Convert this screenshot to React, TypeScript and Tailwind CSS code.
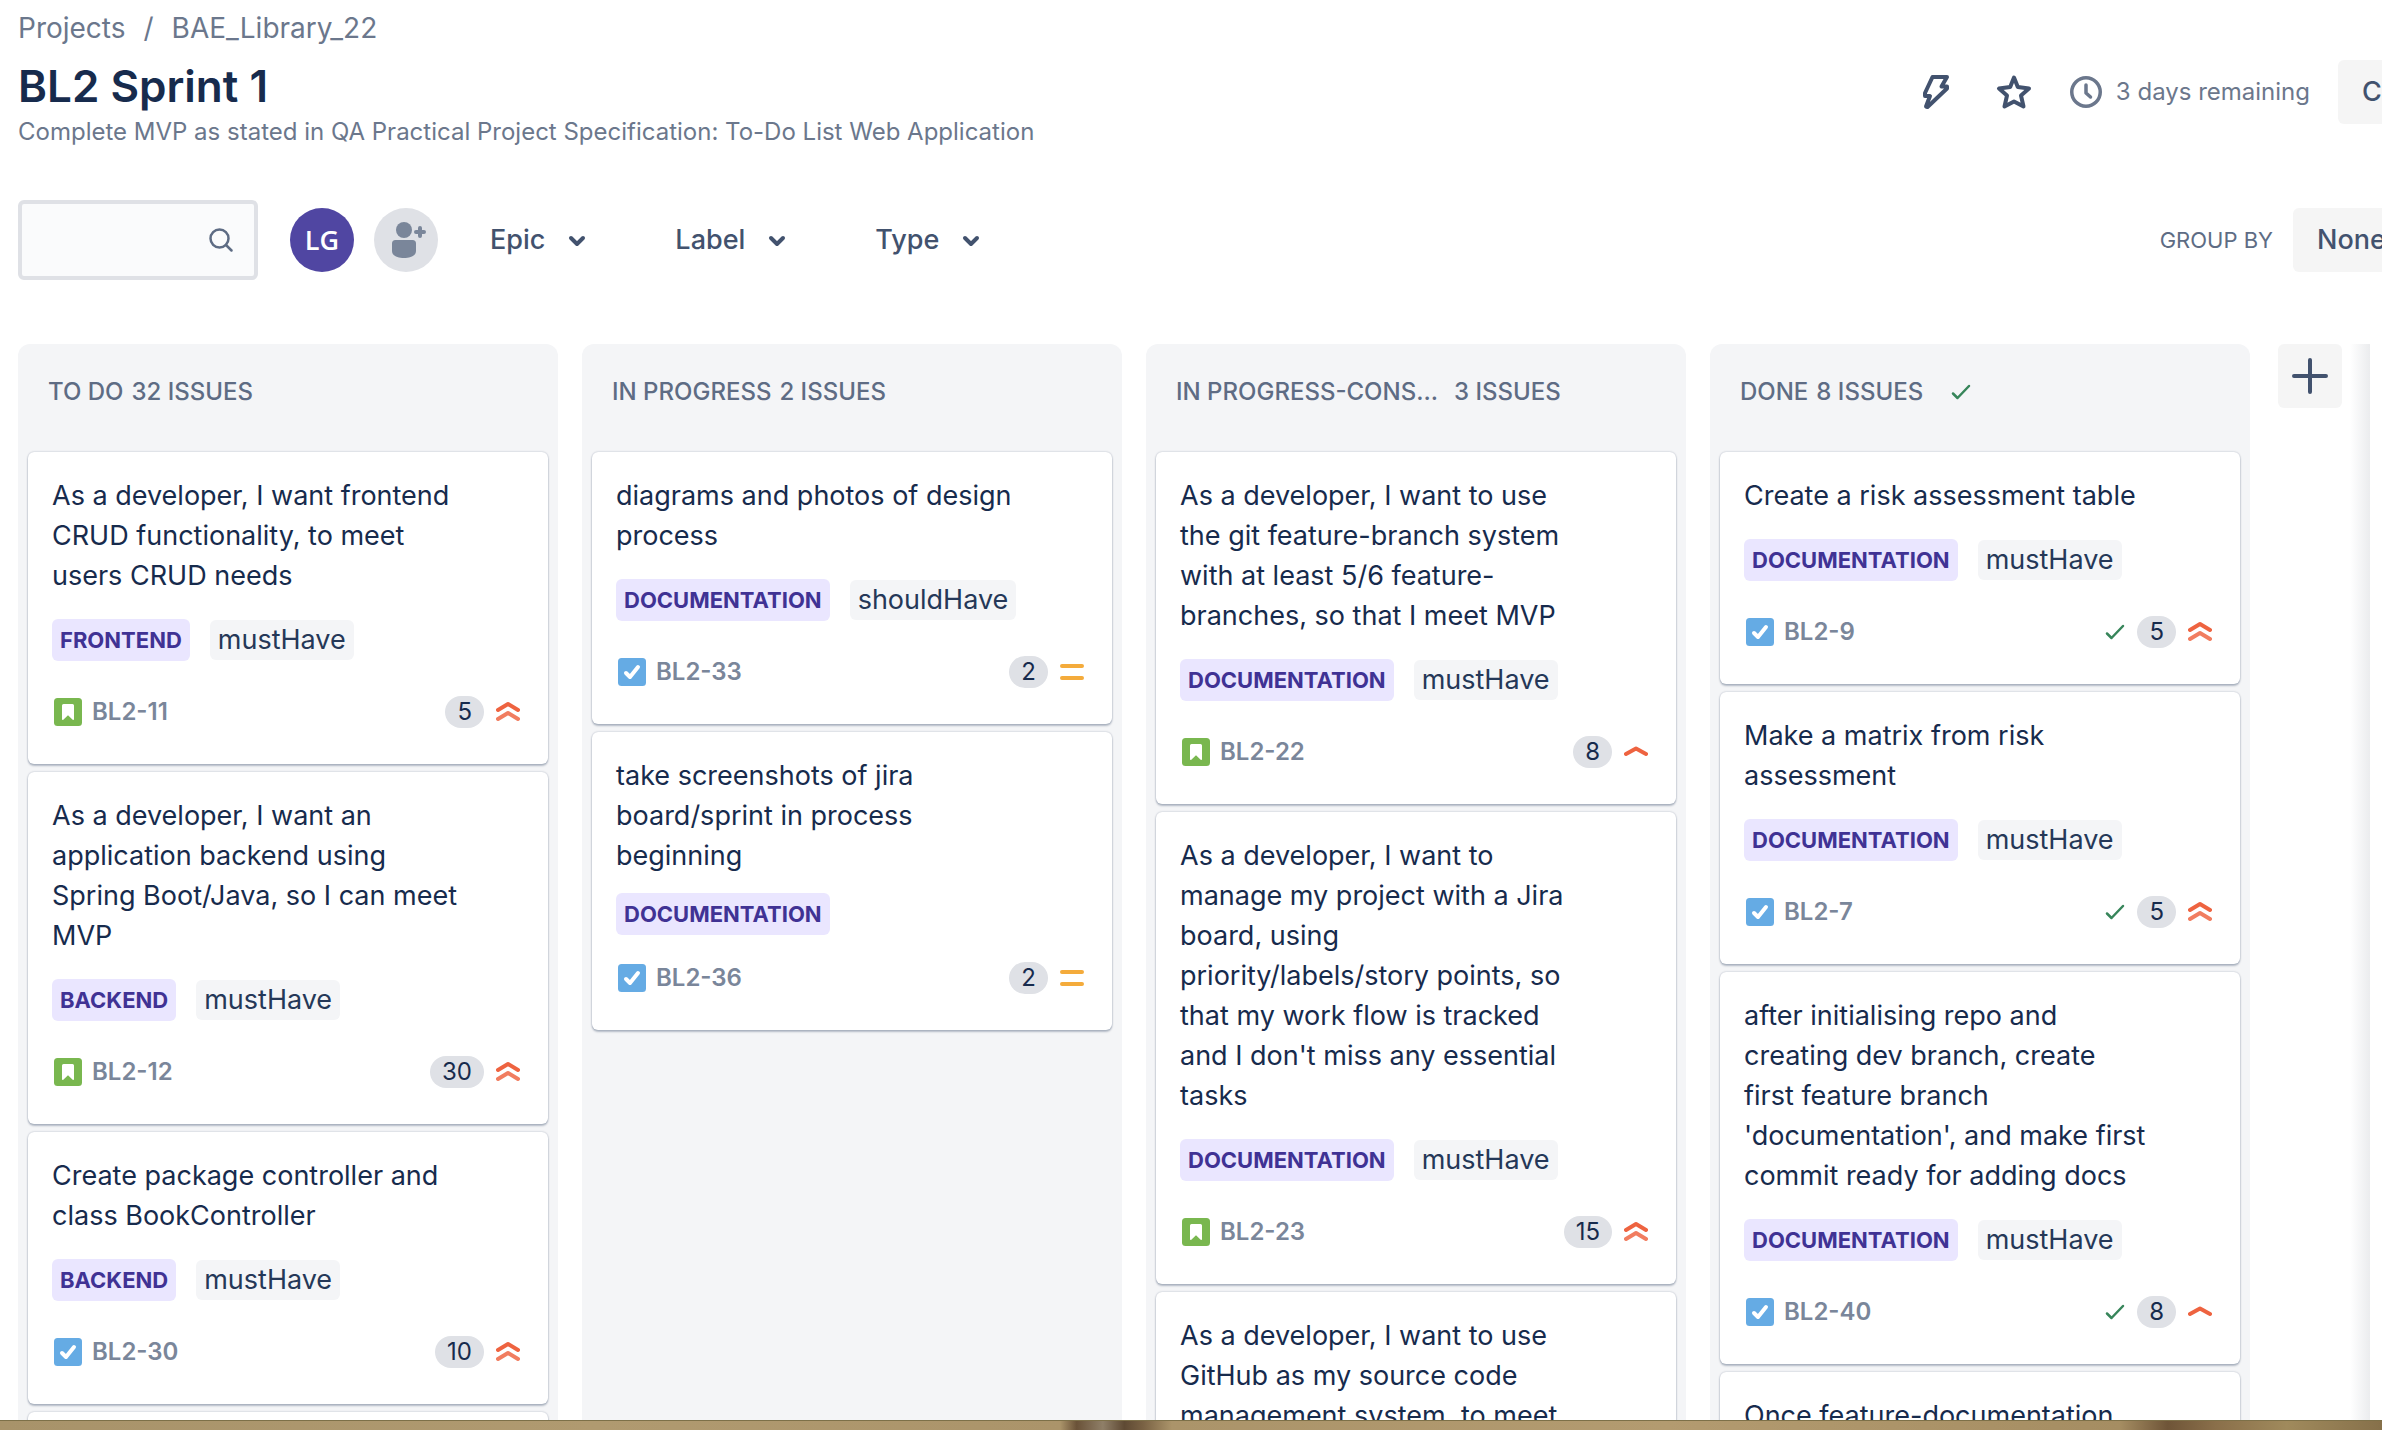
import React from "react";

type Priority = "highest" | "high" | "medium";
type Issue = {
  id: string;
  title: string[];
  epic?: string;
  label?: string;
  kind: "story" | "task";
  points: number;
  priority: Priority;
};
type Column = { name: string; count: string; issues: Issue[]; done?: boolean; truncated?: boolean };

const columns: Column[] = [
  {
    name: "TO DO",
    count: "32 ISSUES",
    issues: [
      { id: "BL2-11", title: ["As a developer, I want frontend", "CRUD functionality, to meet", "users CRUD needs"], epic: "FRONTEND", label: "mustHave", kind: "story", points: 5, priority: "highest" },
      { id: "BL2-12", title: ["As a developer, I want an", "application backend using", "Spring Boot/Java, so I can meet", "MVP"], epic: "BACKEND", label: "mustHave", kind: "story", points: 30, priority: "highest" },
      { id: "BL2-30", title: ["Create package controller and", "class BookController"], epic: "BACKEND", label: "mustHave", kind: "task", points: 10, priority: "highest" },
      { id: "BL2-31", title: ["Create package service"], epic: "BACKEND", label: "mustHave", kind: "task", points: 10, priority: "highest" },
    ],
  },
  {
    name: "IN PROGRESS",
    count: "2 ISSUES",
    issues: [
      { id: "BL2-33", title: ["diagrams and photos of design", "process"], epic: "DOCUMENTATION", label: "shouldHave", kind: "task", points: 2, priority: "medium" },
      { id: "BL2-36", title: ["take screenshots of jira", "board/sprint in process", "beginning"], epic: "DOCUMENTATION", kind: "task", points: 2, priority: "medium" },
    ],
  },
  {
    name: "IN PROGRESS-CONS...",
    count: "3 ISSUES",
    truncated: true,
    issues: [
      { id: "BL2-22", title: ["As a developer, I want to use", "the git feature-branch system", "with at least 5/6 feature-", "branches, so that I meet MVP"], epic: "DOCUMENTATION", label: "mustHave", kind: "story", points: 8, priority: "high" },
      { id: "BL2-23", title: ["As a developer, I want to", "manage my project with a Jira", "board, using", "priority/labels/story points, so", "that my work flow is tracked", "and I don't miss any essential", "tasks"], epic: "DOCUMENTATION", label: "mustHave", kind: "story", points: 15, priority: "highest" },
      { id: "BL2-24", title: ["As a developer, I want to use", "GitHub as my source code", "management system, to meet", "MVP"], epic: "DOCUMENTATION", label: "mustHave", kind: "story", points: 8, priority: "high" },
    ],
  },
  {
    name: "DONE",
    count: "8 ISSUES",
    done: true,
    issues: [
      { id: "BL2-9", title: ["Create a risk assessment table"], epic: "DOCUMENTATION", label: "mustHave", kind: "task", points: 5, priority: "highest" },
      { id: "BL2-7", title: ["Make a matrix from risk", "assessment"], epic: "DOCUMENTATION", label: "mustHave", kind: "task", points: 5, priority: "highest" },
      { id: "BL2-40", title: ["after initialising repo and", "creating dev branch, create", "first feature branch", "'documentation', and make first", "commit ready for adding docs"], epic: "DOCUMENTATION", label: "mustHave", kind: "task", points: 8, priority: "high" },
      { id: "BL2-41", title: ["Once feature-documentation", "is complete"], epic: "DOCUMENTATION", label: "mustHave", kind: "task", points: 8, priority: "high" },
    ],
  },
];

function KindIcon({ kind }: { kind: Issue["kind"] }) {
  return kind === "story" ? (
    <svg viewBox="0 0 28 28" className="size-7 shrink-0" role="img" aria-label="Story">
      <rect width="28" height="28" rx="3.5" fill="#79b74f" />
      <path d="M8 7.5A1.5 1.5 0 0 1 9.5 6h9A1.5 1.5 0 0 1 20 7.5V21.200c0 .7-.8 1-1.300.5L14 17.200l-4.700 4.500c-.5.500-1.300.2-1.300-.5z" fill="#fff" />
    </svg>
  ) : (
    <svg viewBox="0 0 28 28" className="size-7 shrink-0" role="img" aria-label="Task">
      <rect width="28" height="28" rx="3.5" fill="#65abe4" />
      <path d="M8 15 12 19l8-10" fill="none" stroke="#fff" strokeWidth="4" strokeLinecap="round" strokeLinejoin="round" />
    </svg>
  );
}

function PriorityIcon({ priority }: { priority: Priority }) {
  return (
    <svg viewBox="0 0 24 28" className="h-7 w-6 shrink-0" fill="none" strokeWidth="4" strokeLinecap="round" strokeLinejoin="round" role="img" aria-label={priority}>
      {priority === "medium" && <path d="M2 8h20M2 20h20" stroke="#f4ab3b" />}
      {priority === "high" && <path d="M2 16 12 10.500 22 16" stroke="#ee6340" />}
      {priority === "highest" && (
        <>
          <path d="M2 12 12 6l10 6" stroke="#ee6340" />
          <path d="M2 21 12 15l10 6" stroke="#f17d60" />
        </>
      )}
    </svg>
  );
}

function Check({ className }: { className: string }) {
  return (
    <svg viewBox="0 0 20 16" className={className} fill="none" stroke="#37855a" strokeWidth="2.500" strokeLinecap="round" strokeLinejoin="round" aria-hidden="true">
      <path d="M2 9.500 6.500 14 18 2" />
    </svg>
  );
}

function Card({ issue, done }: { issue: Issue; done?: boolean }) {
  return (
    <article className="rounded-md bg-white px-6 pt-6 pb-[34px] shadow-[0_2px_2px_rgba(9,30,66,0.25),0_0_2px_rgba(9,30,66,0.3)]">
      <h3 className="text-[27px] leading-10 whitespace-nowrap text-[#172b4d]">
        {issue.title.map((line) => (
          <span key={line} className="block">{line}</span>
        ))}
      </h3>
      <div className={issue.label ? "mt-[22px] flex h-11 items-center gap-5" : "mt-4 flex h-11 items-center gap-5"}>
        <span className="rounded-md bg-[#eae6ff] px-2 text-[22px] leading-[42px] font-bold text-[#403294]">{issue.epic}</span>
        {issue.label && <span className="rounded-md bg-[#f4f5f7] px-2 text-[27px] leading-10 text-[#253858]">{issue.label}</span>}
      </div>
      <div className={issue.label ? "mt-8 flex h-9 items-center" : "mt-6 flex h-9 items-center"}>
        <div className="flex flex-1 items-center gap-2.5 pl-0.5">
          <KindIcon kind={issue.kind} />
          <a href={"#" + issue.id} className="text-2xl leading-9 font-semibold text-[#7a869a]">{issue.id}</a>
        </div>
        <div className="flex items-center gap-3 pr-1">
          {done && <Check className="h-4 w-5" />}
          <span className="rounded-full bg-[#dfe1e6] px-3 text-2xl leading-8 text-[#172b4d]">{issue.points}</span>
          <PriorityIcon priority={issue.priority} />
        </div>
      </div>
    </article>
  );
}

function Filter({ name }: { name: string }) {
  return (
    <button className="flex items-center gap-[22px] rounded-md">
      <span>{name}</span>
      <svg viewBox="0 0 20 14" className="h-3.5 w-5" fill="none" stroke="currentColor" strokeWidth="4" strokeLinecap="round" strokeLinejoin="round" aria-hidden="true">
        <path d="M4 5 10 11 16 5" />
      </svg>
    </button>
  );
}

export default function App() {
  return (
    <div className="flex h-screen flex-col overflow-hidden bg-white font-['Inter',sans-serif] text-[#42526e]">
      <header className="flex shrink-0 items-start justify-between pt-2 pl-[18px]">
        <div>
          <nav className="flex gap-[18px] text-[28px] leading-10 text-[#6b778c]" aria-label="Breadcrumb">
            <a href="#projects">Projects</a>
            <span>/</span>
            <a href="#library">BAE_Library_22</a>
          </nav>
          <h1 className="mt-2 text-[44px] leading-[60px] font-semibold text-[#172b4d]">BL2 Sprint 1</h1>
          <p className="text-2xl leading-8 text-[#6b778c]">Complete MVP as stated in QA Practical Project Specification: To-Do List Web Application</p>
        </div>
        <div className="mt-[52px] -mr-14 flex h-16 shrink-0 items-center">
          <button aria-label="Automation" className="mr-[46px]">
            <svg viewBox="0 0 28 36" className="h-9 w-7" fill="none" stroke="currentColor" strokeWidth="4" strokeLinecap="round" strokeLinejoin="round">
              <path d="M10.500 3H25l-5.500 9.500H25v2L5.500 33 4 32.500 8 22H3v-3z" />
            </svg>
          </button>
          <button aria-label="Star" className="mr-[38px]">
            <svg viewBox="0 0 36 36" className="size-9" fill="none" stroke="currentColor" strokeWidth="4" strokeLinecap="round" strokeLinejoin="round">
              <path d="M18 3.500 21.800 13 33 14.500l-8 7L27.500 32.500 18 27.500 8.500 32.500 11 21.500l-8-7L14.200 13z" />
            </svg>
          </button>
          <span className="mr-7 flex items-center gap-3.5 text-2xl text-[#6b778c]">
            <svg viewBox="0 0 32 32" className="size-8" fill="none" stroke="currentColor" strokeWidth="3.500" strokeLinecap="round" strokeLinejoin="round" aria-hidden="true">
              <circle cx="16" cy="16" r="14.250" />
              <path d="M16 9v8l4.500 4" />
            </svg>
            3 days remaining
          </span>
          <button className="h-16 w-[100px] overflow-hidden rounded-md bg-[#f5f5f5] pl-6 text-left text-[27px] font-medium whitespace-nowrap">Complete sprint</button>
        </div>
      </header>

      <section className="mt-[52px] flex h-20 shrink-0 items-center pl-[18px]">
        <label className="flex h-20 w-60 items-center rounded-md border-4 border-[#dfe1e6] bg-[#fafbfc] pr-5">
          <input type="search" aria-label="Search board" className="min-w-0 flex-1 bg-transparent pl-4 text-[27px] outline-none" />
          <svg viewBox="0 0 26 26" className="size-[26px]" fill="none" stroke="#5e6c84" strokeWidth="2.500" strokeLinecap="round" aria-hidden="true">
            <circle cx="11.500" cy="11.500" r="9" />
            <path d="m18 18 5.500 5.500" />
          </svg>
        </label>
        <button className="ml-8 size-16 rounded-full bg-[#5046a2] font-['Open_Sans',sans-serif] text-[27px] font-semibold text-white">LG</button>
        <button aria-label="Add people" className="ml-5 flex size-16 items-center justify-center rounded-full bg-[#dfe1e6]">
          <svg viewBox="0 0 64 64" className="size-16" fill="#7a869a">
            <circle cx="30" cy="22" r="8" />
            <path d="M18 35.500a3.500 3.500 0 0 1 3.500-3.500h17a3.500 3.500 0 0 1 3.500 3.500V43c0 5-6 7-12 7s-12-2-12-7z" />
            <path d="M46 20v8M42 24h8" stroke="#7a869a" strokeWidth="4" strokeLinecap="round" />
          </svg>
        </button>
        <div className="ml-[52px] flex gap-[88px] text-[27px] font-medium">
          <Filter name="Epic" />
          <Filter name="Label" />
          <Filter name="Type" />
        </div>
        <div className="-mr-14 ml-auto flex items-center gap-5">
          <span className="text-[22px] text-[#5e6c84]">GROUP BY</span>
          <button className="h-16 w-[145px] rounded-md bg-[#f5f5f5] pl-6 text-left text-[27px] font-medium">None</button>
        </div>
      </section>

      <main className="mt-16 flex min-h-0 flex-1 pl-[18px]">
        <div className="grid min-w-0 flex-1 grid-cols-4 gap-6">
          {columns.map((column) => (
            <section key={column.name} className="min-h-0 overflow-hidden rounded-t-xl bg-[#f4f5f7] px-2.5">
              <h2 className="flex h-[108px] items-center pb-3 pl-5 text-2xl font-medium text-[#5e6c84]">
                <span>{column.name}</span>
                <span className={column.truncated ? "ml-4" : "ml-2"}>{column.count}</span>
                {column.done && <Check className="ml-7 h-4 w-5" />}
              </h2>
              <div className="flex flex-col gap-2">
                {column.issues.map((issue) => (
                  <Card key={issue.id} issue={issue} done={column.done} />
                ))}
              </div>
            </section>
          ))}
        </div>
        <button aria-label="Create column" className="ml-7 flex size-16 shrink-0 items-center justify-center rounded-md bg-[#f5f5f5]">
          <svg viewBox="0 0 36 36" className="size-9" fill="none" stroke="currentColor" strokeWidth="4" strokeLinecap="round">
            <path d="M18 2v32M2 18h32" />
          </svg>
        </button>
        <div className="mr-3 ml-2 w-5 shrink-0 bg-linear-to-r from-white to-[#ebecee]" />
      </main>

      <footer className="h-2.5 shrink-0 border-t border-[#7d7048] bg-[linear-gradient(90deg,#a8936a_0%,#b09a70_25%,#ab946a_44.500%,#6a5238_45.200%,#8f7f68_46.300%,#5f4a34_47.200%,#7a6244_48%,#ab946a_49.200%,#b39b70_70%,#a58d62_89%,#6f5538_91%,#8a6f4a_93%,#a08a5c_96%,#86704a_100%)]" />
    </div>
  );
}
